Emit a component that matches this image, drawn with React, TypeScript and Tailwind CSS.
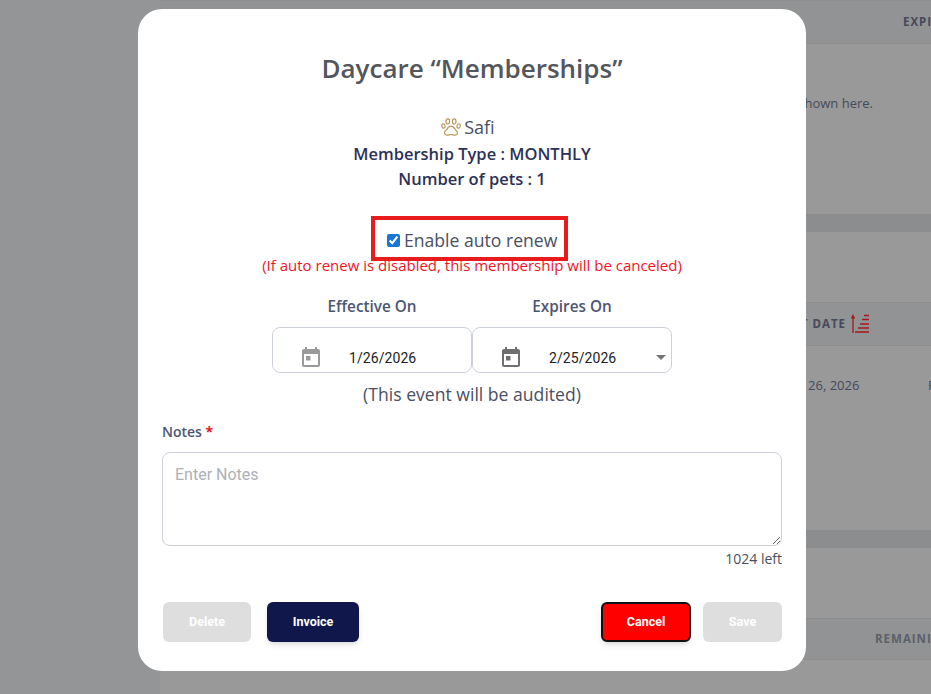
import React from 'react';

function CalendarIcon({ className }: { className: string }) {
  return (
    <svg viewBox="0 0 24 24" className={className} fill="currentColor">
      <path fillRule="evenodd" d="M6 1h2v2h8V1h2v2h1c1.1 0 2 .9 2 2v14c0 1.1-.9 2-2 2H5c-1.1 0-2-.9-2-2V5c0-1.1.9-2 2-2h1V1zM5 8v11h14V8H5z" />
      <path d="M7 10h4.5v4.5H7z" />
    </svg>
  );
}

function PawIcon() {
  return (
    <svg viewBox="0 0 20 18" className="w-[20px] h-[18px] text-[#b8975c]" fill="none" stroke="currentColor" strokeWidth="1.2">
      <ellipse cx="2.4" cy="8" rx="1.6" ry="2.2" transform="rotate(-15 2.4 8)" />
      <ellipse cx="6.8" cy="3.4" rx="1.8" ry="2.6" />
      <ellipse cx="13.2" cy="3.4" rx="1.8" ry="2.6" />
      <ellipse cx="17.6" cy="8" rx="1.6" ry="2.2" transform="rotate(15 17.6 8)" />
      <path d="M10 8.2c-2.2 0-3.4 1.6-4.2 3.2-.7 1.2-2.3 1.8-2.3 3.4 0 1.5 1.3 2.5 2.6 2.4 1.4-.1 2.5-.7 3.9-.7s2.5.6 3.9.7c1.3.1 2.6-.9 2.6-2.4 0-1.6-1.6-2.2-2.3-3.4-.8-1.6-2-3.2-4.2-3.2z" />
    </svg>
  );
}

function SortIcon() {
  return (
    <svg viewBox="0 0 20 20" className="ml-[5px] w-[20px] h-[20px] text-[#a11a1d]" fill="none" stroke="currentColor" strokeWidth="1.3">
      <path d="M2 19V2M0.5 4.5L2 1.5l1.5 3" />
      <path d="M13 1.5h5M11 5.5h7M9 10h9M7 14h11M4 18h14" />
    </svg>
  );
}

function Band() {
  return <div className="h-[18px] bg-[#8c8d8f]" />;
}

function Background() {
  return (
    <div className="flex h-[694px] w-[931px] overflow-hidden bg-[#99999b] font-['Open_Sans',sans-serif]">
      <div className="w-[160px] shrink-0 bg-[#949597]" />
      <div className="flex-1 bg-[#999999] min-w-0">
        <div className="h-[44px] border-y border-[#8e8e8f] bg-[#929394] flex items-center pl-[743px] text-[11.5px] font-bold tracking-[1px] text-[#45495a] whitespace-nowrap">
          EXPIRES
        </div>
        <div className="h-[170px] flex flex-col justify-start pt-[50px] pr-[58px] items-end text-[13px] text-[#45495a]">
          <span>The list of memberships will be shown here.</span>
        </div>
        <Band />
        <div className="h-[70px]" />
        <div className="h-[44px] border-y border-[#8e8e8f] bg-[#929394] flex items-center justify-end pr-[60px] text-[11.5px] font-bold tracking-[1px] text-[#45495a] whitespace-nowrap">
          START DATE
          <SortIcon />
        </div>
        <div className="h-[184px] pt-[30px] pl-[626px] flex text-[13px] text-[#45495a] whitespace-nowrap">
          <span className="w-[142px] shrink-0">Jan 26, 2026</span>
          <span className="shrink-0">F</span>
        </div>
        <Band />
        <div className="h-[70px]" />
        <div className="h-[42px] border-y border-[#8e8e8f] bg-[#929394] flex items-center pl-[715px] text-[11.5px] font-bold tracking-[1px] text-[#5c6068] whitespace-nowrap">
          REMAINING
        </div>
      </div>
    </div>
  );
}

function DateField({ value, active, caret }: { value: string; active?: boolean; caret?: boolean }) {
  return (
    <div className="relative flex items-end w-[200px] h-[46px] border border-[#ccd1d9] rounded-[8px] bg-white pb-[2px] pl-[26px]">
      <CalendarIcon className={active ? 'w-[24px] h-[24px] text-[#6f6f6f]' : 'w-[24px] h-[24px] text-[#9a9a9a]'} />
      <span className="ml-[26px] mb-[2px] font-['Roboto',sans-serif] text-[14px] leading-[20px] tracking-[0.07px] text-[#222222]">{value}</span>
      {caret && <span className="absolute right-[5px] bottom-[12px] w-0 h-0 border-x-[5px] border-x-transparent border-t-[5px] border-t-[#757575]" />}
    </div>
  );
}

export default function App() {
  return (
    <div className="relative h-[694px] w-[931px] overflow-hidden">
      <Background />
      <div className="absolute left-[138px] top-[9px] w-[668px] h-[662px] bg-white rounded-[24px] px-[24px] font-['Open_Sans',sans-serif]">
        <h1 className="mt-[39px] text-center text-[26px] leading-[40px] font-semibold text-[#53565c]">Daycare “Memberships”</h1>

        <div className="mt-[26px] pr-[8px] flex items-center justify-center gap-[3px] text-[18px] leading-[26px] text-[#4a4f63]">
          <PawIcon />
          Safi
        </div>
        <div className="text-center text-[16.5px] leading-[25px] font-semibold text-[#2d3158] mt-[1px]">
          <div>Membership Type : MONTHLY</div>
          <div>Number of pets : 1</div>
        </div>

        <div className="mt-[25px] flex justify-center">
          <label className="mr-[5px] flex items-center gap-[4px] pl-[12px] pt-[4px] w-[197px] h-[45px] border-[4px] border-[#e81c1c] text-[17.6px] text-[#4a4f63]">
            <input type="checkbox" defaultChecked className="w-[13px] h-[13px] accent-[#1976d2]" />
            Enable auto renew
          </label>
        </div>
        <p className="-mt-[4px] text-center text-[15px] leading-[16px] text-[#f4141e]">(If auto renew is disabled, this membership will be canceled)</p>

        <div className="mt-[21px] flex justify-center">
          <div className="w-[200px] text-center text-[15.3px] leading-[24px] font-semibold text-[#4d5672]">Effective On</div>
          <div className="w-[200px] text-center text-[15.3px] leading-[24px] font-semibold text-[#4d5672]">Expires On</div>
        </div>
        <div className="mt-[9px] flex justify-center">
          <DateField value="1/26/2026" />
          <DateField value="2/25/2026" active caret />
        </div>
        <p className="mt-[7px] text-center text-[17.6px] leading-[28px] text-[#4a4f63]">(This event will be audited)</p>

        <div className="mt-[13px] text-[14px] leading-[22px] font-semibold text-[#4d5672]">
          Notes <span className="text-[#e01b24] font-bold">*</span>
        </div>
        <textarea
          placeholder="Enter Notes"
          className="mt-[9px] block w-full h-[94px] border border-[#ccd1d9] rounded-[8px] px-[12px] py-[11px] font-['Roboto',sans-serif] text-[16px] leading-[22px] placeholder:text-[#adb0b6] outline-none"
        />
        <div className="mt-[3px] text-right text-[14px] leading-[20px] text-[#4a4f5a]">1024 left</div>

        <div className="mt-[33px] flex items-center font-['Roboto',sans-serif] text-[12.5px] font-bold text-white">
          <button className="ml-[1px] w-[88px] h-[40px] rounded-[6px] bg-[#dedede]">Delete</button>
          <button className="ml-[16px] w-[92px] h-[40px] rounded-[6px] bg-[#10174a] shadow-md">Invoice</button>
          <button className="ml-auto w-[90px] h-[40px] rounded-[6px] bg-[#ff0000] border-2 border-[#111111] shadow-md">Cancel</button>
          <button className="ml-[12px] w-[79px] h-[40px] rounded-[6px] bg-[#dedede]">Save</button>
        </div>
      </div>
    </div>
  );
}
